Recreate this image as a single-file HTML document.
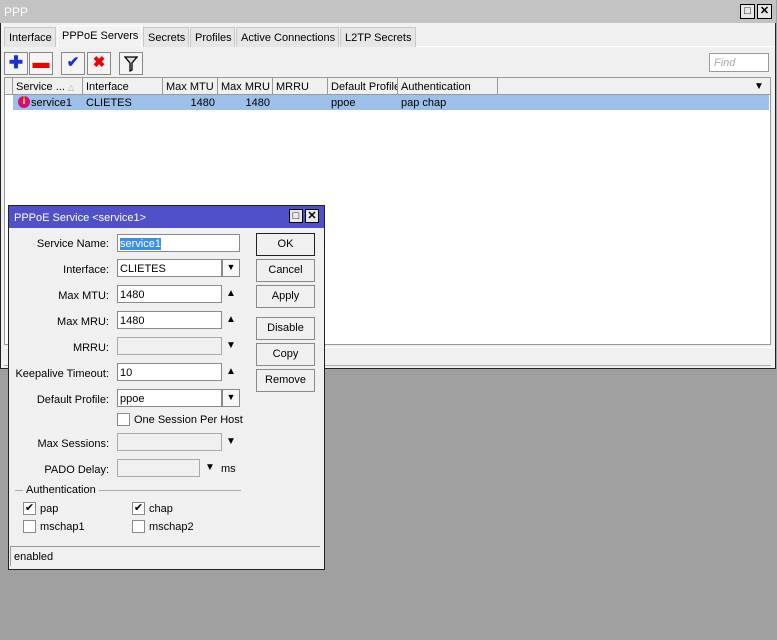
<!DOCTYPE html>
<html><head><style>
*{box-sizing:border-box;margin:0;padding:0}
body{width:777px;height:640px;background:#a0a0a0;font-family:"Liberation Sans",sans-serif;font-size:11px;color:#000;position:relative;overflow:hidden}
.a{position:absolute}
.win{left:0;top:0;width:776px;height:369px;background:#f0f0f0;border:1px solid #222;border-top:none}
.tb{left:0;top:0;width:776px;height:23px;background:#c3c3c3;color:#fff;font-size:12px;padding:5px 4px}
.wb{width:15px;height:15px;border:1px solid #000;background:#e8e8e8;font-size:11px;text-align:center;line-height:13px;font-weight:bold}
.tab{top:27px;height:20px;border:1px solid #c8c8c8;border-bottom:none;background:#e6e6e6;padding:4px 4px;white-space:nowrap}
.btn{top:52px;width:24px;height:23px;border:1px solid #888;background:#f4f4f4;text-align:center;font-weight:bold;line-height:20px;font-size:17px}
.hd{top:78px;height:17px;border-right:1px solid #999;padding:3px 3px;white-space:nowrap;overflow:hidden}
.rw{top:95px;height:15px;padding:2px 3px;white-space:nowrap}
.lb{left:10px;width:99px;text-align:right}
.in{left:117px;height:18px;border:1px solid #8a8a8a;background:#fff;padding:3px 2px;font-size:11px}
.dis{background:#f0f0f0;border-color:#a8a8a8}
.dd{left:222px;width:18px;height:18px;border:1px solid #8a8a8a;background:#f8f8f8;font-size:9px;text-align:center;line-height:15px}
.ar{left:226px;font-size:10px}
.db{left:256px;width:59px;height:23px;border:1px solid #8a8a8a;background:#f0f0f0;text-align:center;line-height:21px}
.cb{width:13px;height:13px;border:1px solid #8a8a8a;background:#fff;font-size:11px;line-height:11px;text-align:center}
</style></head><body>
<div class="a win"></div>
<div class="a tb">PPP</div>
<div class="a wb" style="left:740px;top:4px">□</div>
<div class="a wb" style="left:757px;top:4px">✕</div>
<div class="a" style="left:4px;top:46px;width:769px;height:1px;background:#fff"></div>
<div class="a tab" style="left:4px;width:52px">Interface</div>
<div class="a tab" style="left:57px;top:25px;height:22px;width:85px;background:#f2f2f2;border-color:#fff">PPPoE Servers</div>
<div class="a tab" style="left:143px;width:46px">Secrets</div>
<div class="a tab" style="left:190px;width:45px">Profiles</div>
<div class="a tab" style="left:236px;width:103px">Active Connections</div>
<div class="a tab" style="left:340px;width:76px">L2TP Secrets</div>
<div class="a btn" style="left:4px;color:#1c2fd0">✚</div>
<div class="a btn" style="left:29px;color:#e00">▬</div>
<div class="a btn" style="left:61px;color:#1c2fd0;font-size:15px">✔</div>
<div class="a btn" style="left:87px;color:#e00;font-size:15px">✖</div>
<div class="a btn" style="left:119px;font-size:14px">
<svg width="14" height="16" viewBox="0 0 14 16" style="margin-top:3px"><path d="M1 1H13L8 7V14L6 15V7Z" fill="#ddd" stroke="#000" stroke-width="1.3"/></svg></div>
<div class="a" style="left:709px;top:53px;width:60px;height:19px;border:1px solid #999;background:#fff;color:#aaa;font-style:italic;padding:3px 4px">Find</div>
<div class="a" style="left:4px;top:77px;width:767px;height:268px;background:#fff;border:1px solid #999"></div>
<div class="a" style="left:5px;top:78px;width:765px;height:17px;background:#f0f0f0;border-bottom:1px solid #999"></div>
<div class="a hd" style="left:5px;width:8px"></div>
<div class="a hd" style="left:13px;width:70px">Service ... <span style="color:#aaa;font-size:8px">△</span></div>
<div class="a hd" style="left:83px;width:80px">Interface</div>
<div class="a hd" style="left:163px;width:55px">Max MTU</div>
<div class="a hd" style="left:218px;width:55px">Max MRU</div>
<div class="a hd" style="left:273px;width:55px">MRRU</div>
<div class="a hd" style="left:328px;width:70px">Default Profile</div>
<div class="a hd" style="left:398px;width:100px">Authentication</div>
<div class="a" style="left:754px;top:81px;font-size:10px">▼</div>
<div class="a" style="left:13px;top:95px;width:756px;height:15px;background:#9dc0e8"></div>
<div class="a" style="left:18px;top:96px;width:12px;height:12px;border-radius:50%;background:#d0107a;color:#ff0;font-size:10px;font-weight:bold;text-align:center;line-height:12px">i</div>
<div class="a rw" style="left:28px">service1</div>
<div class="a rw" style="left:83px">CLIETES</div>
<div class="a rw" style="left:163px;width:55px;text-align:right">1480</div>
<div class="a rw" style="left:218px;width:55px;text-align:right">1480</div>
<div class="a rw" style="left:328px">ppoe</div>
<div class="a rw" style="left:398px">pap chap</div>
<div class="a" style="left:4px;top:347px;width:767px;height:1px;background:#fff"></div>
<div class="a" style="left:4px;top:365px;width:767px;height:1px;background:#aaa"></div>

<div class="a" style="left:8px;top:205px;width:317px;height:365px;background:#f0f0f0;border:1px solid #222"></div>
<div class="a" style="left:9px;top:206px;width:315px;height:22px;background:#5050c8;color:#fff;font-size:11px;padding:6px 5px">PPPoE Service &lt;service1&gt;</div>
<div class="a wb" style="left:289px;top:209px;width:14px;height:14px">□</div>
<div class="a wb" style="left:305px;top:209px;width:14px;height:14px">✕</div>

<div class="a lb" style="top:238px">Service Name:</div>
<div class="a in" style="top:234px;width:123px"><span style="background:#3d8ee8;color:#fff">service1</span></div>
<div class="a lb" style="top:264px">Interface:</div>
<div class="a in" style="top:259px;width:105px">CLIETES</div><div class="a dd" style="top:259px">▼</div>
<div class="a lb" style="top:290px">Max MTU:</div>
<div class="a in" style="top:285px;width:105px">1480</div><div class="a ar" style="top:288px">▲</div>
<div class="a lb" style="top:316px">Max MRU:</div>
<div class="a in" style="top:311px;width:105px">1480</div><div class="a ar" style="top:314px">▲</div>
<div class="a lb" style="top:342px">MRRU:</div>
<div class="a in dis" style="top:337px;width:105px"></div><div class="a ar" style="top:340px">▼</div>
<div class="a lb" style="top:368px;left:8px;width:101px">Keepalive Timeout:</div>
<div class="a in" style="top:363px;width:105px">10</div><div class="a ar" style="top:366px">▲</div>
<div class="a lb" style="top:394px">Default Profile:</div>
<div class="a in" style="top:389px;width:105px">ppoe</div><div class="a dd" style="top:389px">▼</div>
<div class="a cb" style="left:117px;top:413px"></div>
<div class="a" style="left:134px;top:414px">One Session Per Host</div>
<div class="a lb" style="top:438px">Max Sessions:</div>
<div class="a in dis" style="top:433px;width:105px"></div><div class="a ar" style="top:436px">▼</div>
<div class="a lb" style="top:464px">PADO Delay:</div>
<div class="a in dis" style="top:459px;width:83px"></div><div class="a" style="left:205px;top:462px;font-size:10px">▼</div><div class="a" style="left:221px;top:463px">ms</div>
<div class="a" style="left:15px;top:490px;width:226px;height:1px;background:#aaa"></div>
<div class="a" style="left:23px;top:484px;background:#f0f0f0;padding:0 3px">Authentication</div>
<div class="a cb" style="left:23px;top:502px">✔</div><div class="a" style="left:40px;top:503px">pap</div>
<div class="a cb" style="left:132px;top:502px">✔</div><div class="a" style="left:149px;top:503px">chap</div>
<div class="a cb" style="left:23px;top:520px"></div><div class="a" style="left:40px;top:521px">mschap1</div>
<div class="a cb" style="left:132px;top:520px"></div><div class="a" style="left:149px;top:521px">mschap2</div>

<div class="a db" style="top:233px;border-color:#222">OK</div>
<div class="a db" style="top:259px">Cancel</div>
<div class="a db" style="top:285px">Apply</div>
<div class="a db" style="top:317px">Disable</div>
<div class="a db" style="top:343px">Copy</div>
<div class="a db" style="top:369px">Remove</div>
<div class="a" style="left:10px;top:546px;width:310px;height:20px;border-top:1px solid #999;border-left:1px solid #999;padding:4px 3px">enabled</div>
</body></html>
